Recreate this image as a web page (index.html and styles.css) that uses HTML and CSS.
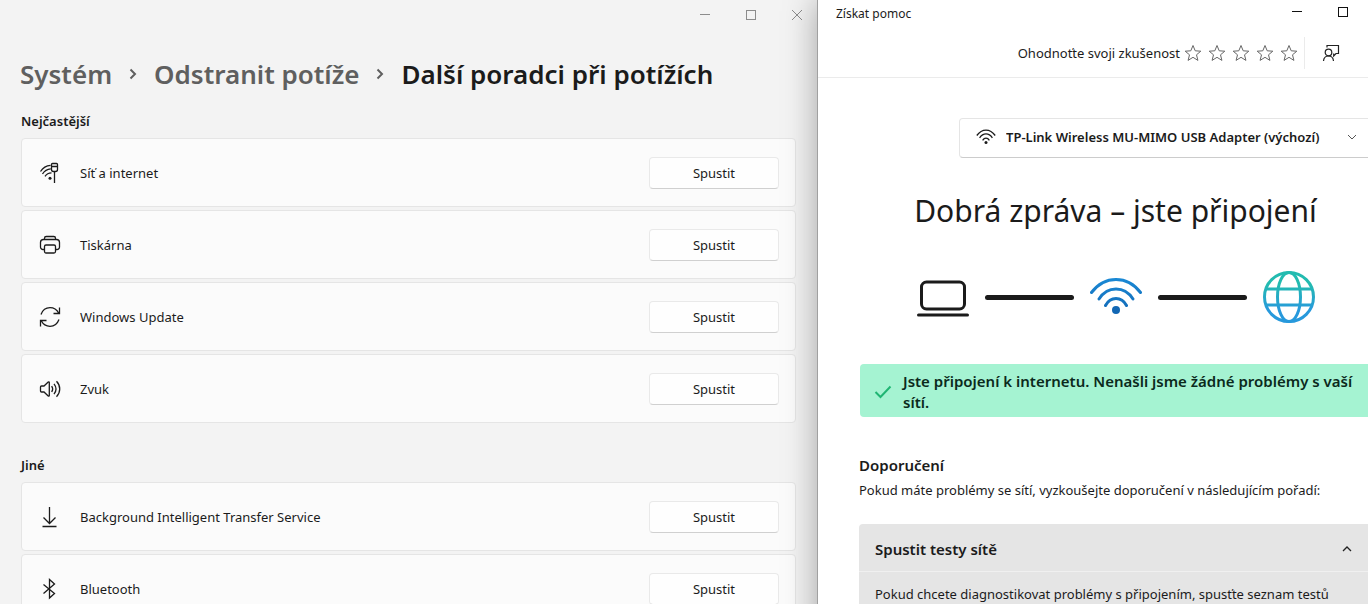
FILE: index.html
```html
<!DOCTYPE html>
<html lang="cs">
<head>
<meta charset="utf-8">
<title>Další poradci při potížích</title>
<link rel="stylesheet" href="styles.css">
</head>
<body>
<div class="desktop">
  <section class="settings" aria-label="Nastavení">
    <header class="settings-bar">
      <button class="caption" aria-label="Minimalizovat"><svg width="12" height="12" viewBox="0 0 12 12"><path d="M1 5.500h10"/></svg></button>
      <button class="caption" aria-label="Maximalizovat"><svg width="12" height="12" viewBox="0 0 12 12"><rect x="1.500" y="1.500" width="9" height="9"/></svg></button>
      <button class="caption" aria-label="Zavřít"><svg width="12" height="12" viewBox="0 0 12 12"><path d="M1 1l10 10M11 1L1 11"/></svg></button>
    </header>
    <nav class="crumbs">
      <a href="#system">Systém</a>
      <svg class="crumb-arrow" width="8" height="12" viewBox="0 0 8 12"><path d="M1.500 1.500l4.500 4.500-4.500 4.500"/></svg>
      <a href="#potize">Odstranit potíže</a>
      <svg class="crumb-arrow" width="8" height="12" viewBox="0 0 8 12"><path d="M1.500 1.500l4.500 4.500-4.500 4.500"/></svg>
      <h1>Další poradci při potížích</h1>
    </nav>

    <h2 class="group-title">Nejčastější</h2>
    <ul class="cards">
      <li class="card">
        <svg class="icon" width="22" height="22" viewBox="0 0 22 22"><path d="M1.500 9.500C4 5.500 7.500 3.500 11.500 3.300M3.500 12C5.500 8.700 8.500 7 11.700 6.800M6 14.300c1.500-2.300 3.700-3.500 6.500-3.500M15.500 10v11M12.500 2.500c0-.6.400-1 1-1h4c.6 0 1 .4 1 1v5c0 1.200-.8 2-2 2h-2c-1.200 0-2-.8-2-2zM12.500 4.500h6"/><circle class="solid" cx="11" cy="16.200" r="1.500"/></svg>
        <span class="card-name">Síť a internet</span>
        <button class="run">Spustit</button>
      </li>
      <li class="card">
        <svg class="icon" width="22" height="22" viewBox="0 0 22 22"><path d="M5.500 15.500H4A2.500 2.500 0 0 1 1.500 13V8.500A3 3 0 0 1 4.500 5.500h13a3 3 0 0 1 3 3V13a2.500 2.500 0 0 1-2.500 2.500h-1.500M5.500 5.500V4.300c0-1 .8-1.800 1.800-1.800h7.400c1 0 1.800.8 1.800 1.800v1.200M7 11h8c.8 0 1.500.7 1.500 1.500v5c0 .8-.7 1.500-1.500 1.500H7c-.8 0-1.500-.7-1.500-1.500v-5c0-.8.7-1.500 1.500-1.500z"/></svg>
        <span class="card-name">Tiskárna</span>
        <button class="run">Spustit</button>
      </li>
      <li class="card">
        <svg class="icon" width="22" height="22" viewBox="0 0 22 22"><path d="M2 8.500C3.500 4.500 7 1.700 11 1.700c3.800 0 7 2.200 8.800 5.500M20.500 1.500v6h-6M20 13.500c-1.500 4-5 6.800-9 6.800-3.800 0-7-2.200-8.800-5.500M1.500 20.500v-6h6"/></svg>
        <span class="card-name">Windows Update</span>
        <button class="run">Spustit</button>
      </li>
      <li class="card">
        <svg class="icon" width="22" height="22" viewBox="0 0 22 22"><path d="M1.500 9c0-.6.400-1 1-1H5l4.200-4c.5-.4 1.100-.2 1.100.5v13c0 .7-.6.900-1.100.5L5 14H2.500c-.6 0-1-.4-1-1zM12.700 8c1.300 2 1.300 4 0 6M15 5.800c2.500 3.200 2.500 7.200 0 10.400M17.500 3.300c4.300 4.500 4.300 10.900 0 15.400"/></svg>
        <span class="card-name">Zvuk</span>
        <button class="run">Spustit</button>
      </li>
    </ul>

    <h2 class="group-title">Jiné</h2>
    <ul class="cards">
      <li class="card">
        <svg class="icon" width="22" height="22" viewBox="0 0 22 22"><path d="M10.500 1v16M4.500 11.500l6 6 6-6M3.500 20.500h14"/></svg>
        <span class="card-name">Background Intelligent Transfer Service</span>
        <button class="run">Spustit</button>
      </li>
      <li class="card">
        <svg class="icon" width="22" height="22" viewBox="0 0 22 22"><path d="M4.500 6.500l11 9-5 4.500V1.500l5 4.500-11 9.500"/></svg>
        <span class="card-name">Bluetooth</span>
        <button class="run">Spustit</button>
      </li>
    </ul>
  </section>

  <section class="help" aria-label="Získat pomoc">
    <header class="help-bar">
      <span class="help-title">Získat pomoc</span>
      <button class="caption dark" aria-label="Minimalizovat"><svg width="12" height="12" viewBox="0 0 12 12"><path d="M1 5.500h10"/></svg></button>
      <button class="caption dark" aria-label="Maximalizovat"><svg width="12" height="12" viewBox="0 0 12 12"><rect x="1.500" y="1.500" width="9" height="9"/></svg></button>
    </header>
    <div class="toolbar">
      <span>Ohodnoťte svoji zkušenost</span>
      <div class="stars">
        <button aria-label="1 hvězdička"><svg width="18" height="18" viewBox="0 0 18 18"><path d="M9 1.500l2.200 5.300 5.600.4-4.300 3.600 1.400 5.600L9 13.300l-4.900 3.100 1.400-5.600L1.200 7.200l5.600-.4z"/></svg></button>
        <button aria-label="2 hvězdičky"><svg width="18" height="18" viewBox="0 0 18 18"><path d="M9 1.500l2.200 5.300 5.600.4-4.300 3.600 1.400 5.600L9 13.300l-4.900 3.100 1.400-5.600L1.200 7.200l5.600-.4z"/></svg></button>
        <button aria-label="3 hvězdičky"><svg width="18" height="18" viewBox="0 0 18 18"><path d="M9 1.500l2.200 5.300 5.600.4-4.300 3.600 1.400 5.600L9 13.300l-4.900 3.100 1.400-5.600L1.200 7.200l5.600-.4z"/></svg></button>
        <button aria-label="4 hvězdičky"><svg width="18" height="18" viewBox="0 0 18 18"><path d="M9 1.500l2.200 5.300 5.600.4-4.300 3.600 1.400 5.600L9 13.300l-4.900 3.100 1.400-5.600L1.200 7.200l5.600-.4z"/></svg></button>
        <button aria-label="5 hvězdiček"><svg width="18" height="18" viewBox="0 0 18 18"><path d="M9 1.500l2.200 5.300 5.600.4-4.300 3.600 1.400 5.600L9 13.300l-4.900 3.100 1.400-5.600L1.200 7.200l5.600-.4z"/></svg></button>
      </div>
      <button class="feedback" aria-label="Váš názor"><svg width="18" height="18" viewBox="0 0 18 18"><path d="M5 3.500v-2h11.500v8h-2.500L11.700 12v-2.500M1.500 17c.3-3.300 2-5 5-5s4.700 1.700 5 5"/><circle cx="6.500" cy="8.500" r="3.300"/></svg></button>
    </div>

    <main class="content">
      <label class="adapter">
        <svg width="20" height="16" viewBox="0 0 20 16"><path d="M.8 6.500C6-.8 14-.8 19.200 6.500M3.600 8.800c3.600-5.200 9.200-5.200 12.800 0M6.600 11.300c1.900-2.900 4.900-2.900 6.800 0"/><circle class="solid" cx="10" cy="13.500" r="1.500"/></svg>
        <select aria-label="Síťový adaptér"><option>TP-Link Wireless MU-MIMO USB Adapter (výchozí)</option></select>
        <svg class="chevron" width="10" height="6" viewBox="0 0 10 6"><path d="M1 1l4 4 4-4"/></svg>
      </label>

      <h1 class="headline">Dobrá zpráva – jste připojení</h1>

      <div class="chain">
        <svg width="52" height="52" viewBox="0 0 52 52" fill="none" stroke="#1b1b1b" stroke-width="3" stroke-linecap="round"><rect x="4.500" y="11" width="43" height="27" rx="5"/><path d="M1.500 44h49"/></svg>
        <span class="link-line"></span>
        <svg width="52" height="52" viewBox="0 0 52 52" fill="none" stroke="url(#wifi-blue)" stroke-width="3" stroke-linecap="round"><defs><linearGradient id="wifi-blue" gradientUnits="userSpaceOnUse" x1="0" y1="6" x2="0" y2="44"><stop offset="0" stop-color="#1a8ad6"/><stop offset="1" stop-color="#1267b4"/></linearGradient></defs><path d="M1.500 21.500C14.500 4 37.500 4 50.500 21.500M9 28c8.500-13.300 25.500-13.300 34 0M15.500 34.500c5-9.300 16-9.300 21 0"/><circle cx="26" cy="39" r="4" fill="#1267b4" stroke="none"/></svg>
        <span class="link-line"></span>
        <svg width="52" height="52" viewBox="0 0 52 52" fill="none" stroke="url(#globe-mix)" stroke-width="3"><defs><linearGradient id="globe-mix" gradientUnits="userSpaceOnUse" x1="0" y1="0" x2="0" y2="52"><stop offset=".25" stop-color="#23bbb0"/><stop offset=".75" stop-color="#2799dc"/></linearGradient></defs><circle cx="26" cy="26" r="24.500"/><ellipse cx="26" cy="26" rx="11.500" ry="24.500"/><path d="M3 18h46M3 34h46"/></svg>
      </div>

      <div class="notice" role="status">
        <svg width="18" height="14" viewBox="0 0 18 14"><path d="M1.500 7l5 5L16.500 1.500"/></svg>
        <p>Jste připojení k internetu. Nenašli jsme žádné problémy s vaší sítí.</p>
      </div>

      <h2 class="advice-title">Doporučení</h2>
      <p class="advice">Pokud máte problémy se sítí, vyzkoušejte doporučení v následujícím pořadí:</p>

      <div class="accordion">
        <button class="accordion-head" aria-expanded="true">Spustit testy sítě
          <svg class="chevron" width="10" height="6" viewBox="0 0 10 6"><path d="M1 5l4-4 4 4"/></svg>
        </button>
        <p class="accordion-body">Pokud chcete diagnostikovat problémy s připojením, spusťte seznam testů</p>
      </div>
    </main>
  </section>
</div>
</body>
</html>
```
FILE: styles.css
```css
* { box-sizing: border-box; }

body {
  margin: 0;
  background: #f3f3f3;
  color: #1b1b1b;
  font: 13px/20px "Noto Sans", "Open Sans", sans-serif;
}

h1, h2, p, ul { margin: 0; padding: 0; }

button, select {
  margin: 0;
  padding: 0;
  border: 0;
  background: none;
  color: inherit;
  font: inherit;
}

svg { flex: none; }

.desktop {
  display: grid;
  grid-template-columns: 818fr 550fr;
  height: 100vh;
  overflow: hidden;
}

/* Settings window */
.settings { min-width: 0; }

.settings-bar {
  display: flex;
  justify-content: flex-end;
  gap: 4px;
}

.caption {
  display: flex;
  align-items: center;
  justify-content: center;
  width: 42px;
  height: 30px;
}

.caption svg { fill: none; stroke: #8c8c8c; }
.caption.dark svg { stroke: #111; }

.crumbs {
  display: flex;
  align-items: center;
  gap: 17px;
  padding: 24px 20px 0;
  font-size: 26px;
  font-weight: 600;
  line-height: 40px;
  white-space: nowrap;
}

.crumbs a { color: #5f5f5f; text-decoration: none; }
.crumbs h1 { font-size: inherit; font-weight: 600; }

.crumb-arrow { fill: none; stroke: #5f5f5f; stroke-width: 2; }

.group-title {
  padding: 17px 21px 7px;
  font-size: 13px;
  font-weight: 600;
}

.cards {
  display: grid;
  gap: 3px;
  padding: 0 22px 15px 21px;
  list-style: none;
}

.card {
  display: flex;
  align-items: center;
  min-height: 69px;
  padding: 0 16px 0 17px;
  border: 1px solid #e5e5e5;
  border-radius: 4px;
  background: #fbfbfb;
}

.icon { fill: none; stroke: #1b1b1b; stroke-width: 1.3; }
.solid { fill: #1b1b1b; stroke: none; }

.card-name { flex: 1; padding-left: 19px; }

.run {
  width: 130px;
  height: 32px;
  border: 1px solid #e9e9e9;
  border-bottom-color: #d0d0d0;
  border-radius: 4px;
  background: #fefefe;
}

/* Help window */
.help {
  position: relative;
  min-width: 0;
  background: #fff;
  box-shadow: -1px 0 0 #a0a0a0, 0 0 32px rgba(0, 0, 0, 0.35);
}

.help-bar {
  display: flex;
  align-items: center;
  height: 26px;
  padding: 0 4px 0 18px;
  gap: 4px;
}

.help-title { flex: 1; padding-top: 2px; font-size: 12px; }
.help-bar .caption { height: 24px; align-self: flex-start; }

.toolbar {
  display: flex;
  align-items: center;
  justify-content: flex-end;
  height: 52px;
  padding-top: 3px;
  border-bottom: 1px solid #ebebeb;
  white-space: nowrap;
}

.stars { display: flex; padding: 0 3px 0 1px; }
.stars button { display: flex; justify-content: center; width: 24px; }
.stars svg { fill: none; stroke: #666; }

.feedback {
  display: flex;
  align-items: center;
  padding: 0 28px 0 17px;
  height: 32px;
  border-left: 1px solid #ebebeb;
}

.feedback svg { fill: none; stroke: #222; stroke-width: 1.2; }

/* The right edge runs past the screen */
.content { margin-right: -4px; padding: 40px 0 0 41px; }

.adapter {
  display: flex;
  align-items: center;
  width: 413px;
  height: 40px;
  margin-left: auto;
  padding: 0 14px 2px 16px;
  border: 1px solid #e5e5e5;
  border-bottom-color: #cccccc;
  border-radius: 4px;
}

.adapter svg { fill: none; stroke: #1b1b1b; stroke-width: 1.3; }
.adapter .solid { fill: #1b1b1b; stroke: none; }
.adapter .chevron { stroke: #555; stroke-width: 1; }

.adapter select {
  flex: 1;
  min-width: 0;
  margin-left: 10px;
  appearance: none;
  font-size: 13px;
  font-weight: 600;
}

.chevron { fill: none; stroke: #444; }

.headline {
  margin-top: 31px;
  padding-bottom: 1px;
  font-size: 30px;
  font-weight: 400;
  line-height: 44px;
  text-align: center;
  white-space: nowrap;
}

.chain {
  display: flex;
  align-items: center;
  justify-content: center;
  gap: 16px;
  margin-top: 37px;
}

.link-line {
  width: 89px;
  height: 5px;
  border-radius: 3px;
  background: #1b1b1b;
}

.notice {
  display: flex;
  align-items: center;
  gap: 11px;
  margin: 41px 0 0 1px;
  padding: 7px 16px 4px 14px;
  border-radius: 4px;
  background: #a5f3d2;
  color: #0b2a1c;
  font-size: 15px;
  font-weight: 600;
  line-height: 21px;
}

.notice svg { fill: none; stroke: #1fb573; stroke-width: 2; }

.advice-title {
  margin-top: 36px;
  font-size: 15px;
  font-weight: 600;
  line-height: 24px;
}

.advice { margin-top: 3px; white-space: nowrap; }

.accordion {
  margin-top: 24px;
  border-radius: 4px 4px 0 0;
  background: #e5e5e5;
}

.accordion-head {
  display: flex;
  align-items: center;
  justify-content: space-between;
  width: 100%;
  height: 48px;
  padding: 2px 20px 0 16px;
  border-bottom: 1px solid #f0f0f0;
  font-size: 15px;
  font-weight: 600;
}

.accordion-head .chevron { stroke: #222; stroke-width: 1.3; }

.accordion-body { padding: 12px 16px; white-space: nowrap; }
```
